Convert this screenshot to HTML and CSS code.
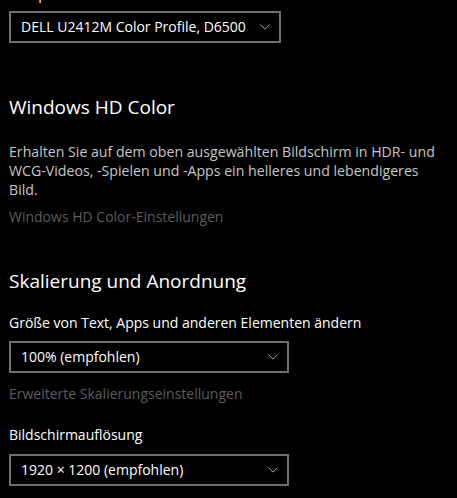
FILE: index.html
```html
<!DOCTYPE html>
<html lang="de">
<head>
<meta charset="utf-8">
<title>Anzeige</title>
<link rel="stylesheet" href="styles.css">
</head>
<body>
<main class="page">
  <div class="label label-top">Farbprofil</div>
  <div class="combo combo-profile">
    <span class="combo-text">DELL U2412M Color Profile, D6500</span>
    <svg class="chev" width="12" height="7" viewBox="0 0 12 7"><polyline points="0.5,0.5 6,6 11.5,0.5" fill="none" stroke="#c8c8c8" stroke-width="1"/></svg>
  </div>

  <h2 class="heading heading-hd">Windows HD Color</h2>
  <p class="desc">Erhalten Sie auf dem oben ausgewählten Bildschirm in HDR- und<br>WCG-Videos, -Spielen und -Apps ein helleres und lebendigeres<br>Bild.</p>
  <div class="link link-hd">Windows HD Color-Einstellungen</div>

  <h2 class="heading heading-scale">Skalierung und Anordnung</h2>
  <div class="label label-size">Größe von Text, Apps und anderen Elementen ändern</div>
  <div class="combo combo-wide combo-scale">
    <span class="combo-text">100% (empfohlen)</span>
    <svg class="chev" width="12" height="7" viewBox="0 0 12 7"><polyline points="0.5,0.5 6,6 11.5,0.5" fill="none" stroke="#c8c8c8" stroke-width="1"/></svg>
  </div>
  <div class="link link-scale">Erweiterte Skalierungseinstellungen</div>
  <div class="label label-res">Bildschirmauflösung</div>
  <div class="combo combo-wide combo-res">
    <span class="combo-text">1920 × 1200 (empfohlen)</span>
    <svg class="chev" width="12" height="7" viewBox="0 0 12 7"><polyline points="0.5,0.5 6,6 11.5,0.5" fill="none" stroke="#c8c8c8" stroke-width="1"/></svg>
  </div>
</main>
</body>
</html>
```

FILE: styles.css
```css
html, body {
  margin: 0;
  padding: 0;
  background: #000;
  overflow: hidden;
}
body {
  width: 457px;
  height: 498px;
  font-family: "Open Sans", "Noto Sans", sans-serif;
  font-size: 14px;
  color: #fff;
}
.page {
  display: flex;
  flex-direction: column;
  align-items: flex-start;
  padding-left: 9px;
}
.label {
  line-height: 19px;
  color: #fff;
  white-space: nowrap;
}
.label-top { margin-top: -16px; }
.combo {
  box-sizing: border-box;
  height: 32px;
  border: 2px solid #6f6f6f;
  display: flex;
  align-items: center;
  padding: 0 8px 0 10px;
  color: #fff;
}
.combo-profile { width: 272px; margin-top: 8px; }
.combo-wide { width: 280px; }
.combo-text {
  display: block;
  line-height: 19px;
  padding-bottom: 2px;
  white-space: nowrap;
}
.chev {
  display: block;
  margin-left: auto;
  height: 6px;
}
.heading {
  margin: 0;
  font-size: 19px;
  font-weight: 400;
  line-height: 26px;
  color: #fff;
  white-space: nowrap;
}
.heading-hd { margin-top: 51px; }
.desc {
  margin: 22px 0 0;
  font-size: 14.15px;
  line-height: 19px;
  color: #c6c6c6;
  white-space: nowrap;
}
.link {
  line-height: 19px;
  color: #5c5c5c;
  white-space: nowrap;
}
.link-hd { margin-top: 8px; }
.heading-scale { margin-top: 42px; }
.label-size { margin-top: 19px; }
.combo-scale { margin-top: 9px; }
.link-scale { margin-top: 11px; }
.label-res { margin-top: 22px; }
.combo-res { margin-top: 10px; }
```
